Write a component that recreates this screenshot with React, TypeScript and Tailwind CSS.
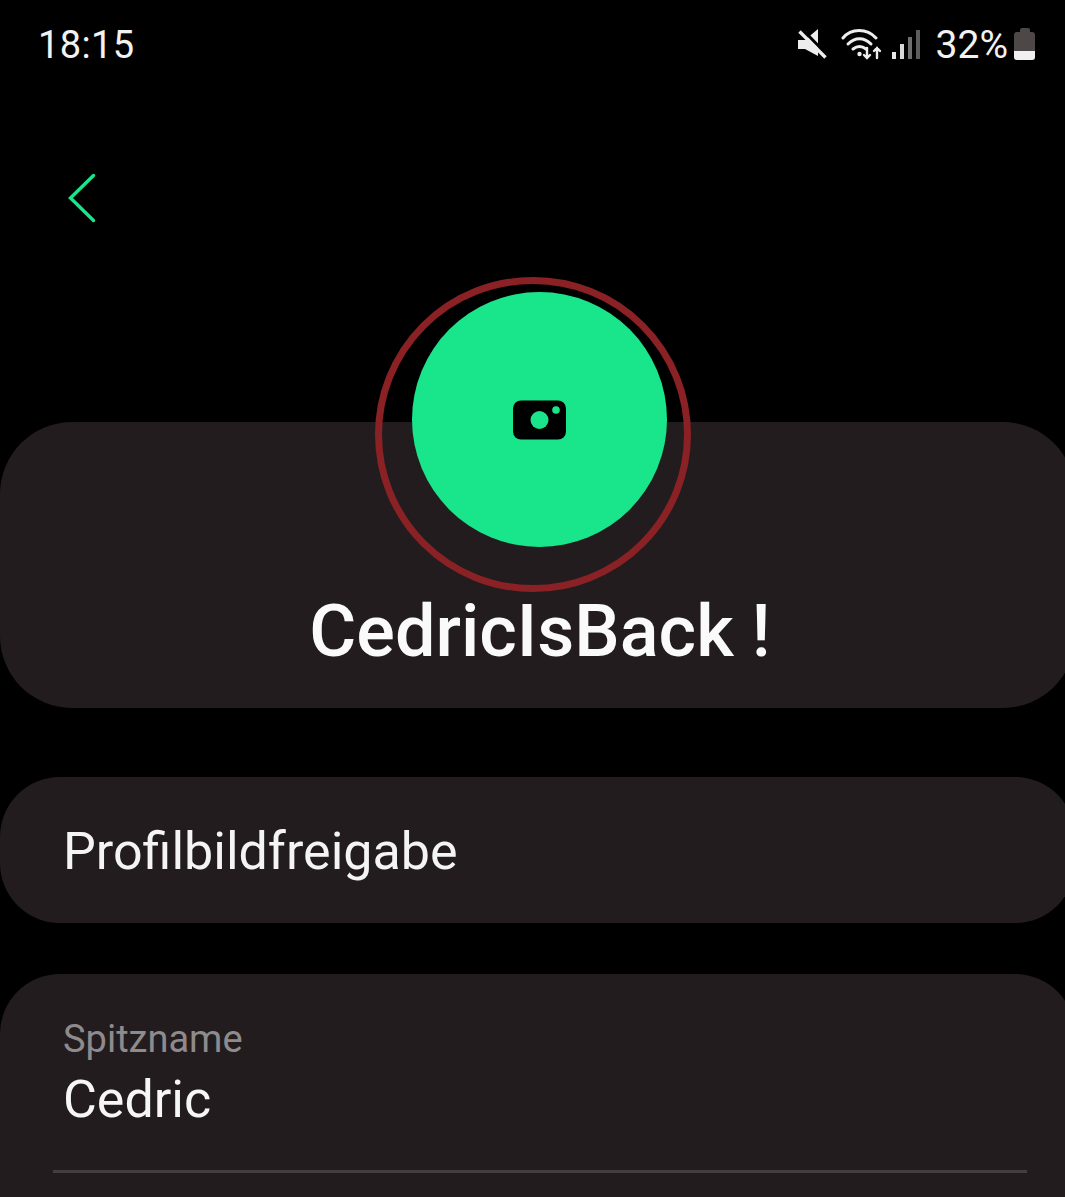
const font = "font-['Roboto','Noto_Sans',sans-serif]";

function MuteIcon() {
  return (
    <svg width="32" height="32" viewBox="0 0 32 32" className="text-[#ededed]">
      <path d="M1 12h7L21 1v27L8 21H1z" fill="currentColor" />
      <path d="M5 1l27 28" stroke="#000" strokeWidth="3" />
      <path d="M2.5 3.5l26 26" stroke="currentColor" strokeWidth="3.4" />
    </svg>
  );
}

function WifiIcon() {
  return (
    <svg width="42" height="32" viewBox="0 0 42 32" fill="none" stroke="#ededed" strokeLinecap="round">
      <path d="M2 10C10 0 26 0 35 10" strokeWidth="3" />
      <path d="M7 16c7-7 16-7 23 0" strokeWidth="3" />
      <path d="M12 21c4-3 9-3 13 0" strokeWidth="3" />
      <circle cx="18.5" cy="26" r="2.2" fill="#ededed" stroke="none" />
      <path d="M26 20v10M23 27l3 3 3-3" strokeWidth="2.4" />
      <path d="M36 30V20M33 23l3-3 3 3" strokeWidth="2.4" />
    </svg>
  );
}

function SignalIcon() {
  return (
    <div className="flex items-end gap-[4px] h-[29px]">
      <div className="w-[4px] h-[7px] bg-[#e8e8e8]" />
      <div className="w-[4px] h-[15px] bg-[#d8d8d8]" />
      <div className="w-[4px] h-[22px] bg-[#6e6e6e]" />
      <div className="w-[4px] h-[29px] bg-[#5c5c5c]" />
    </div>
  );
}

function BatteryIcon() {
  return (
    <div className="flex flex-col items-center">
      <div className="w-[10px] h-[4px] rounded-t-[2px] bg-[#4d4748]" />
      <div className="w-[21px] h-[28px] rounded-[3px] overflow-hidden flex flex-col bg-[#4d4748]">
        <div className="flex-1" />
        <div className="h-[9px] bg-[#f0f0f0]" />
      </div>
    </div>
  );
}

function CameraIcon() {
  return (
    <svg width="54" height="40" viewBox="0 0 54 40">
      <rect x="0" y="0.5" width="53" height="39" rx="8" fill="#000" />
      <circle cx="26.5" cy="20" r="9" fill="#19e58a" />
      <circle cx="43" cy="10" r="3.8" fill="#19e58a" />
    </svg>
  );
}

export default function App() {
  return (
    <div className={`${font} w-[1065px] h-[1197px] overflow-hidden bg-black text-white relative`}>
      <div className="flex items-center justify-between h-[88px] pl-[38px] pr-[30px]">
        <span className="text-[38px] text-[#f2f2f2] tracking-[0.4px] mt-[2px]">18:15</span>
        <div className="flex items-center">
          <MuteIcon />
          <div className="ml-[12px]"><WifiIcon /></div>
          <div className="ml-[9px]"><SignalIcon /></div>
          <span className="ml-[16px] text-[39px] text-[#f2f2f2] mt-[2px]">32%</span>
          <div className="ml-[6px]"><BatteryIcon /></div>
        </div>
      </div>

      <div className="pl-[68px] pt-[85px] h-[334px]">
        <svg width="28" height="50" viewBox="0 0 28 50" fill="none" stroke="#19e58a" strokeWidth="3.4" strokeLinecap="round">
          <path d="M25.5 2.5L2.5 25 25.5 47.5" />
        </svg>
      </div>

      <div className="w-[1075px] h-[286px] rounded-[72px] bg-[#231c1f] flex justify-center pt-[169px] pl-[5px]">
        <h1 className="text-[72px] leading-[80px] font-medium text-[#fafafa] mt-[1px]">CedricIsBack !</h1>
      </div>

      <div className="mt-[69px] w-[1075px] h-[146px] rounded-[60px] bg-[#231c1f] flex items-center pl-[63px]">
        <span className="text-[52px] leading-[60px] text-[#f4f4f4] mt-[4px]">Profilbildfreigabe</span>
      </div>

      <div className="mt-[51px] w-[1075px] h-[300px] rounded-[60px] bg-[#231c1f] pl-[63px] pt-[44px]">
        <p className="text-[38px] leading-[42px] text-[#8f8b8c]">Spitzname</p>
        <p className="text-[52px] leading-[60px] text-[#f6f6f6] mt-[10px]">Cedric</p>
        <div className="w-[974px] h-[3px] bg-[#453e41] -ml-[10px] mt-[40px]" />
      </div>

      <div className="absolute left-[375px] top-[277px] w-[316px] h-[315px] rounded-full border-[7px] border-[#8a2125]" />
      <div className="absolute left-[412px] top-[292px] w-[255px] h-[255px] rounded-full bg-[#19e58a] flex items-center justify-center">
        <CameraIcon />
      </div>
    </div>
  );
}
